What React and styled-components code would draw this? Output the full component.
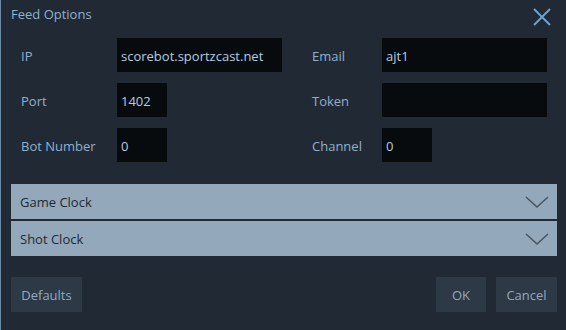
import { Fragment } from "react"
import styled, { createGlobalStyle } from "styled-components"

const GlobalStyle = createGlobalStyle`
  html, body {
    margin: 0;
    padding: 0;
    background: #212a34;
  }
  body {
    font-family: "Open Sans", "Noto Sans", sans-serif;
  }
`

const Dialog = styled.div`
  width: 566px;
  height: 330px;
  box-sizing: border-box;
  background: #212a34;
  border-left: 1px solid #6d8aa6;
  display: flex;
  flex-direction: column;
`

const Header = styled.div`
  height: 38px;
  display: flex;
  align-items: flex-start;
  justify-content: space-between;
  padding: 4px 14px 0 10px;
  box-sizing: border-box;
`

const Title = styled.div`
  color: #8fb1d0;
  font-size: 13px;
  line-height: 20px;
`

const CloseButton = styled.button`
  background: none;
  border: none;
  padding: 0;
  margin-top: 3px;
  width: 20px;
  height: 20px;
  cursor: pointer;
  display: flex;
`

const FormGrid = styled.div`
  display: grid;
  grid-template-columns: 96px 165px 30px 70px 165px;
  grid-auto-rows: 34px;
  row-gap: 11px;
  padding-left: 20px;
`

const Label = styled.div`
  grid-column: ${(p) => p.col};
  display: flex;
  align-items: center;
  padding-top: 1px;
  color: #8fb0cc;
  font-size: 13px;
`

const Field = styled.div`
  grid-column: ${(p) => p.col};
  width: ${(p) => p.w}px;
  background: #080b0e;
  color: #b6cbe0;
  font-size: 13px;
  display: flex;
  align-items: center;
  padding: 1px 0 0 4px;
  box-sizing: border-box;
`

const Sections = styled.div`
  margin: 22px 9px 0 10px;
  display: flex;
  flex-direction: column;
  gap: 2px;
`

const SectionBar = styled.div`
  height: 35px;
  box-sizing: border-box;
  background: #93a9bb;
  display: flex;
  align-items: center;
  justify-content: space-between;
  padding: 1px 8px 0 9px;
  color: #1e2833;
  font-size: 13px;
`

const Footer = styled.div`
  margin: 21px 9px 0 10px;
  display: flex;
  gap: 10px;
`

const Button = styled.button`
  height: 35px;
  padding: 0;
  width: ${(p) => p.w}px;
  background: #2d3945;
  border: none;
  color: #8fa9c1;
  font-family: inherit;
  font-size: 13px;
  margin-left: ${(p) => (p.push ? "auto" : "0")};
`

const Chevron = () => (
  <svg width="24" height="14" viewBox="0 0 24 14">
    <path d="M1 2 L12 12 L23 2" fill="none" stroke="#4a5560" strokeWidth="1.6" />
  </svg>
)

const rows = [
  ["IP", "scorebot.sportzcast.net", 165, "Email", "ajt1", 165],
  ["Port", "1402", 50, "Token", "", 165],
  ["Bot Number", "0", 50, "Channel", "0", 50],
]

const App = () => (
  <>
    <GlobalStyle />
    <Dialog>
      <Header>
        <Title>Feed Options</Title>
        <CloseButton>
          <svg width="20" height="20" viewBox="0 0 20 20">
            <path d="M2 2 L18 18 M18 2 L2 18" stroke="#6aa7d8" strokeWidth="1.8" />
          </svg>
        </CloseButton>
      </Header>
      <FormGrid>
        {rows.map(([l1, v1, w1, l2, v2, w2]) => (
          <Fragment key={l1}>
            <Label col={1}>{l1}</Label>
            <Field col={2} w={w1}>{v1}</Field>
            <Label col={4}>{l2}</Label>
            <Field col={5} w={w2}>{v2}</Field>
          </Fragment>
        ))}
      </FormGrid>
      <Sections>
        <SectionBar>
          Game Clock
          <Chevron />
        </SectionBar>
        <SectionBar>
          Shot Clock
          <Chevron />
        </SectionBar>
      </Sections>
      <Footer>
        <Button w={71}>Defaults</Button>
        <Button w={50} push>OK</Button>
        <Button w={61}>Cancel</Button>
      </Footer>
    </Dialog>
  </>
)

export default App
